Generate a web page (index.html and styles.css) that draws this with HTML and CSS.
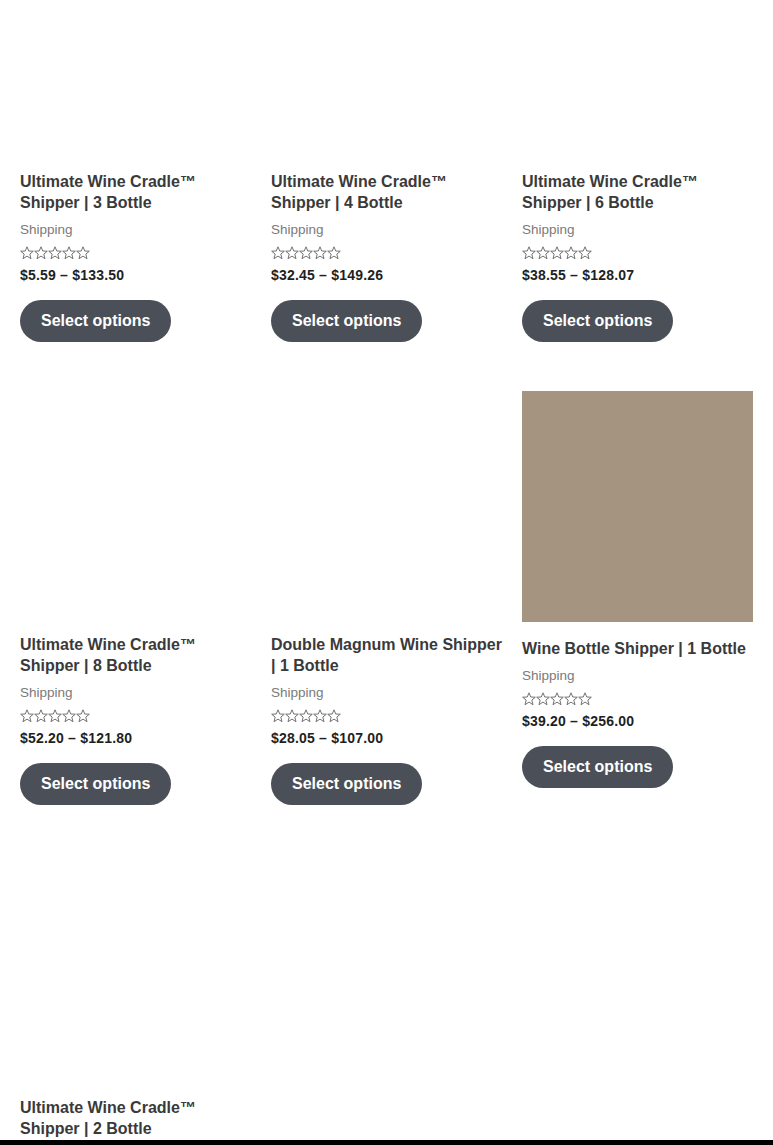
FILE: index.html
```html
<!DOCTYPE html>
<html lang="en">
<head>
<meta charset="utf-8">
<title>Shippers</title>
<link rel="stylesheet" href="styles.css">
</head>
<body>
<svg width="0" height="0" class="defs" aria-hidden="true">
  <defs>
    <symbol id="star" viewBox="0 0 14 14">
      <path d="M7 0.8 L8.75 5 L13.3 5.2 L9.8 8.1 L11 12.7 L7 10.1 L3 12.7 L4.2 8.1 L0.7 5.2 L5.25 5 Z" fill="none" stroke="#6a6a6a" stroke-width="0.95" stroke-linejoin="miter"/>
    </symbol>
  </defs>
</svg>
<ul class="products">
  <li class="product">
    <div class="thumb thumb-blank"></div>
    <h2 class="title">Ultimate Wine Cradle™ Shipper | 3 Bottle</h2>
    <div class="cat">Shipping</div>
    <div class="stars"><svg><use href="#star"/></svg><svg><use href="#star"/></svg><svg><use href="#star"/></svg><svg><use href="#star"/></svg><svg><use href="#star"/></svg></div>
    <div class="price">$5.59 – $133.50</div>
    <a class="btn" href="#">Select options</a>
  </li>
  <li class="product">
    <div class="thumb thumb-blank"></div>
    <h2 class="title">Ultimate Wine Cradle™ Shipper | 4 Bottle</h2>
    <div class="cat">Shipping</div>
    <div class="stars"><svg><use href="#star"/></svg><svg><use href="#star"/></svg><svg><use href="#star"/></svg><svg><use href="#star"/></svg><svg><use href="#star"/></svg></div>
    <div class="price">$32.45 – $149.26</div>
    <a class="btn" href="#">Select options</a>
  </li>
  <li class="product">
    <div class="thumb thumb-blank"></div>
    <h2 class="title">Ultimate Wine Cradle™ Shipper | 6 Bottle</h2>
    <div class="cat">Shipping</div>
    <div class="stars"><svg><use href="#star"/></svg><svg><use href="#star"/></svg><svg><use href="#star"/></svg><svg><use href="#star"/></svg><svg><use href="#star"/></svg></div>
    <div class="price">$38.55 – $128.07</div>
    <a class="btn" href="#">Select options</a>
  </li>
  <li class="product">
    <div class="thumb thumb-blank"></div>
    <h2 class="title">Ultimate Wine Cradle™ Shipper | 8 Bottle</h2>
    <div class="cat">Shipping</div>
    <div class="stars"><svg><use href="#star"/></svg><svg><use href="#star"/></svg><svg><use href="#star"/></svg><svg><use href="#star"/></svg><svg><use href="#star"/></svg></div>
    <div class="price">$52.20 – $121.80</div>
    <a class="btn" href="#">Select options</a>
  </li>
  <li class="product">
    <div class="thumb thumb-blank"></div>
    <h2 class="title">Double Magnum Wine Shipper | 1 Bottle</h2>
    <div class="cat">Shipping</div>
    <div class="stars"><svg><use href="#star"/></svg><svg><use href="#star"/></svg><svg><use href="#star"/></svg><svg><use href="#star"/></svg><svg><use href="#star"/></svg></div>
    <div class="price">$28.05 – $107.00</div>
    <a class="btn" href="#">Select options</a>
  </li>
  <li class="product">
    <div class="thumb thumb-photo"></div>
    <h2 class="title">Wine Bottle Shipper | 1 Bottle</h2>
    <div class="cat">Shipping</div>
    <div class="stars"><svg><use href="#star"/></svg><svg><use href="#star"/></svg><svg><use href="#star"/></svg><svg><use href="#star"/></svg><svg><use href="#star"/></svg></div>
    <div class="price">$39.20 – $256.00</div>
    <a class="btn" href="#">Select options</a>
  </li>
  <li class="product">
    <div class="thumb thumb-blank"></div>
    <h2 class="title">Ultimate Wine Cradle™ Shipper | 2 Bottle</h2>
    <div class="cat">Shipping</div>
    <div class="stars"><svg><use href="#star"/></svg><svg><use href="#star"/></svg><svg><use href="#star"/></svg><svg><use href="#star"/></svg><svg><use href="#star"/></svg></div>
    <div class="price">$19.99 – $99.00</div>
    <a class="btn" href="#">Select options</a>
  </li>
</ul>
<div class="bottom-bar"></div>
</body>
</html>
```
FILE: styles.css
```css
html, body {
  margin: 0;
  padding: 0;
  background: #ffffff;
  font-family: "Liberation Sans", Arial, sans-serif;
  overflow: hidden;
  height: 1145px;
}
.defs {
  position: absolute;
  width: 0;
  height: 0;
}
.products {
  list-style: none;
  margin: -72px 0 0 0;
  padding: 0 20px;
  display: grid;
  grid-template-columns: repeat(3, 1fr);
  column-gap: 20px;
  row-gap: 49px;
  align-items: start;
}
.product {
  display: flex;
  flex-direction: column;
  align-items: flex-start;
}
.thumb {
  width: 100%;
  margin-bottom: 15px;
}
.thumb-blank {
  height: 228px;
}
.thumb-photo {
  height: 231px;
  margin-bottom: 16px;
  background: #a59580;
}
.title {
  margin: 0;
  font-size: 16px;
  line-height: 21px;
  font-weight: 700;
  color: #3a3a3a;
}
.cat {
  margin-top: 9px;
  font-size: 13.5px;
  line-height: 16px;
  color: #7a7a7a;
}
.stars {
  display: flex;
  margin-top: 8px;
  height: 14px;
}
.stars svg {
  width: 14px;
  height: 14px;
}
.price {
  margin-top: 7px;
  font-size: 14px;
  letter-spacing: 0.2px;
  line-height: 17px;
  font-weight: 700;
  color: #1f1f1f;
}
.btn {
  margin-top: 16px;
  display: inline-block;
  background: #4b4f58;
  color: #ffffff;
  text-decoration: none;
  font-size: 16px;
  font-weight: 700;
  line-height: 42px;
  height: 42px;
  padding: 0 21px;
  border-radius: 21px;
}
.bottom-bar {
  position: fixed;
  left: 0;
  right: 0;
  bottom: 0;
  height: 5px;
  background: #000000;
}
```
